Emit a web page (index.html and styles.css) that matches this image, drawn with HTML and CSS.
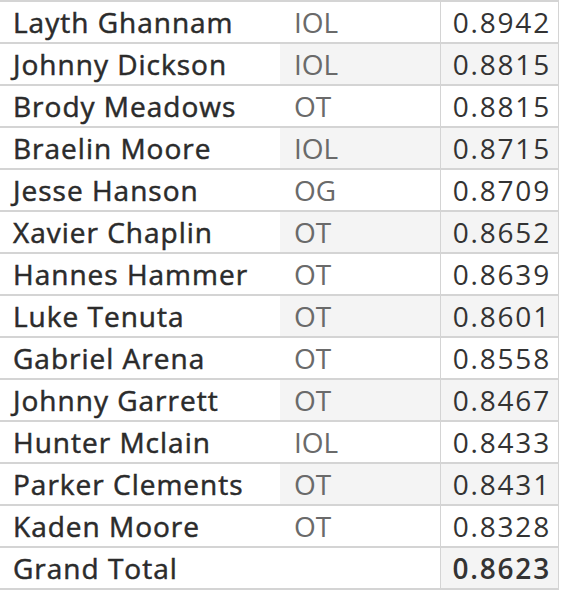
FILE: index.html
```html
<!DOCTYPE html>
<html>
<head>
<meta charset="utf-8">
<link rel="stylesheet" href="styles.css">
</head>
<body>
<div class="table">
  <div class="row"><div class="name">Layth Ghannam</div><div class="pos">IOL</div><div class="val">0.8942</div></div>
  <div class="row alt"><div class="name">Johnny Dickson</div><div class="pos">IOL</div><div class="val">0.8815</div></div>
  <div class="row"><div class="name">Brody Meadows</div><div class="pos">OT</div><div class="val">0.8815</div></div>
  <div class="row alt"><div class="name">Braelin Moore</div><div class="pos">IOL</div><div class="val">0.8715</div></div>
  <div class="row"><div class="name">Jesse Hanson</div><div class="pos">OG</div><div class="val">0.8709</div></div>
  <div class="row alt"><div class="name">Xavier Chaplin</div><div class="pos">OT</div><div class="val">0.8652</div></div>
  <div class="row"><div class="name">Hannes Hammer</div><div class="pos">OT</div><div class="val">0.8639</div></div>
  <div class="row alt"><div class="name">Luke Tenuta</div><div class="pos">OT</div><div class="val">0.8601</div></div>
  <div class="row"><div class="name">Gabriel Arena</div><div class="pos">OT</div><div class="val">0.8558</div></div>
  <div class="row alt"><div class="name">Johnny Garrett</div><div class="pos">OT</div><div class="val">0.8467</div></div>
  <div class="row"><div class="name">Hunter Mclain</div><div class="pos">IOL</div><div class="val">0.8433</div></div>
  <div class="row alt"><div class="name">Parker Clements</div><div class="pos">OT</div><div class="val">0.8431</div></div>
  <div class="row"><div class="name">Kaden Moore</div><div class="pos">OT</div><div class="val">0.8328</div></div>
  <div class="row total"><div class="name">Grand Total</div><div class="pos"></div><div class="val">0.8623</div></div>
</div>
</body>
</html>
```
FILE: styles.css
```css
html, body {
  margin: 0;
  padding: 0;
  background: #ffffff;
}
.table {
  width: 559px;
  font-family: "Open Sans", "Noto Sans", sans-serif;
  font-size: 28px;
  color: #333333;
  border-top: 2px solid #d4d4d4;
}
.row {
  display: grid;
  grid-template-columns: 280px 160px 119px;
  height: 40px;
  border-bottom: 2px solid #d4d4d4;
}
.row > div {
  display: flex;
  align-items: center;
  white-space: nowrap;
}
.name {
  padding-left: 13px;
  letter-spacing: 1px;
  color: #2b2b2b;
  -webkit-text-stroke: 0.5px #2b2b2b;
}
.pos {
  padding-left: 14px;
  color: #6a6a6a;
}
.val {
  justify-content: flex-end;
  padding-right: 7px;
  letter-spacing: 1.8px;
  color: #333333;
  border-left: 1px solid #d4d4d4;
  border-right: 1px solid #d4d4d4;
}
.alt .pos, .alt .val {
  background: #f4f4f4;
}
.total .val {
  background: #f4f4f4;
  font-weight: 600;
}
```
